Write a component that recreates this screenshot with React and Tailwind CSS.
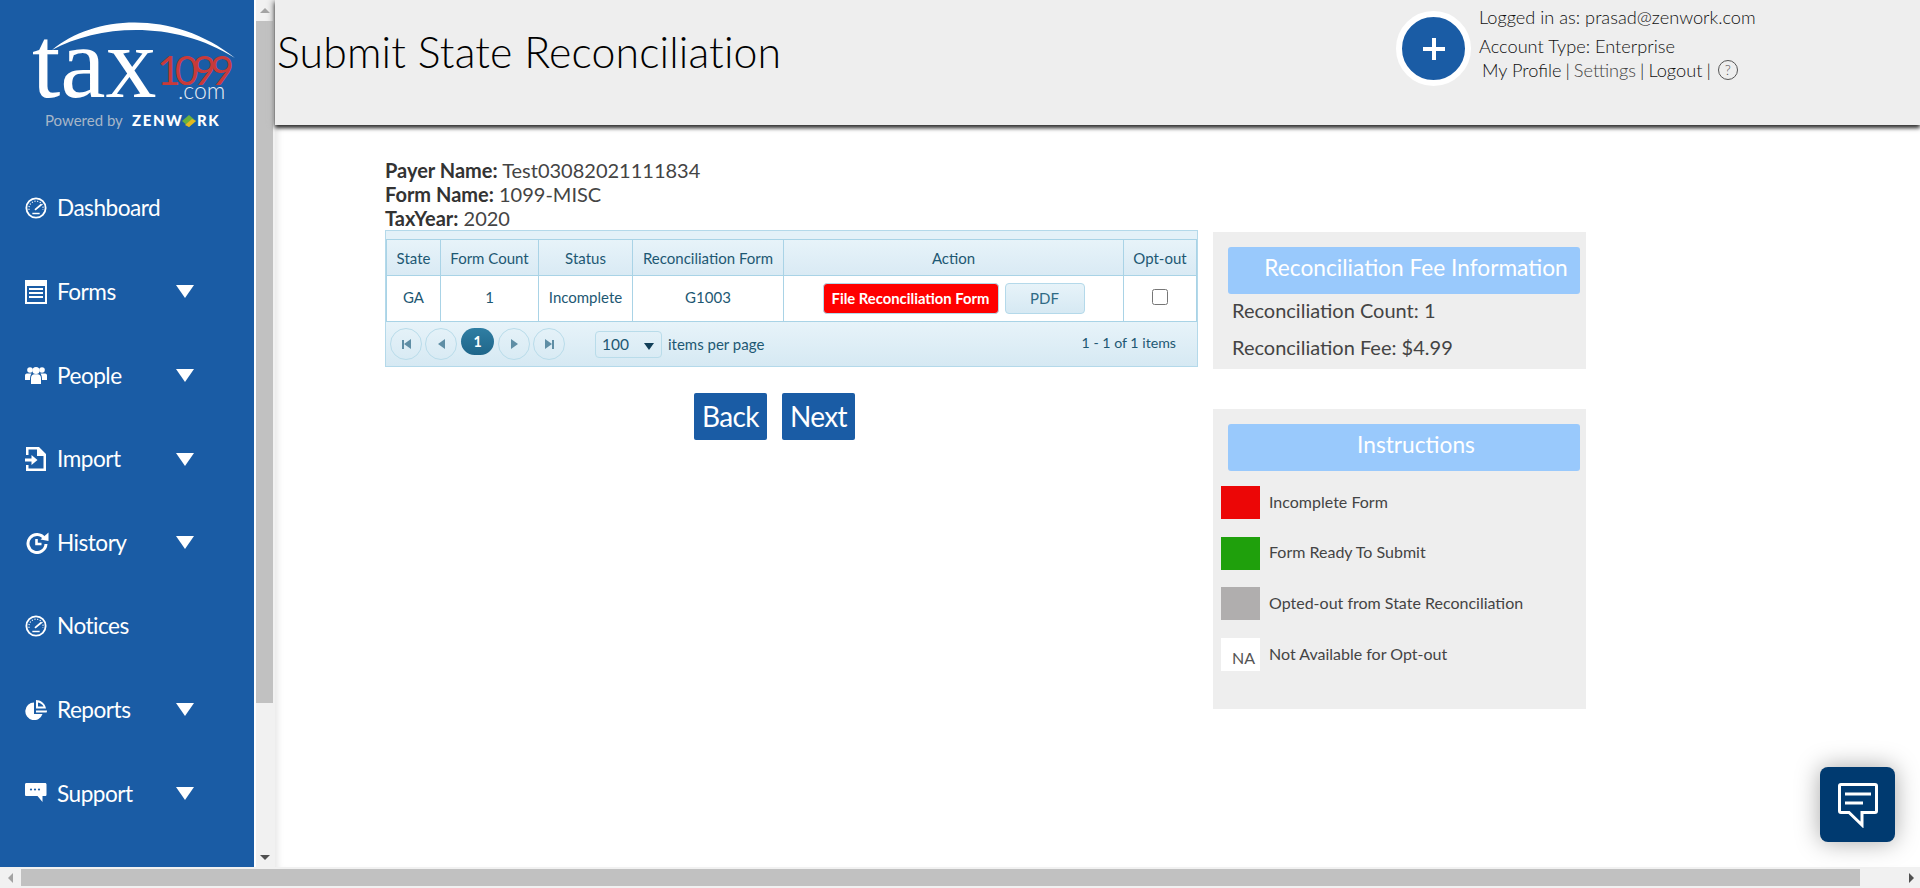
import React from "react";

const latoFont = { fontFamily: '"Lato", sans-serif' };

// sidebar icons, all drawn on a 24 box
const GaugeIcon = () => (
  <svg width="22" height="22" viewBox="0 0 24 24" fill="none" stroke="white">
    <circle cx="12" cy="12" r="10.500" strokeWidth="2" />
    <path d="M4.500 14a7.700 7.700 0 1 1 15 0" strokeWidth="1.300" strokeDasharray="1.200 1.800" />
    <path d="M11.500 13.500 L17.500 8.500" strokeWidth="2" strokeLinecap="round" />
    <path d="M8 18h8" strokeWidth="1.600" />
  </svg>
);

const FormsIcon = () => (
  <svg width="22" height="24" viewBox="0 0 22 24" fill="white">
    <path d="M0 0h22v24H0z M2 6v16h18V6z" fillRule="evenodd" />
    <path d="M4 8h14v2H4zM4 12h14v2H4zM4 16h14v2H4z" />
  </svg>
);

const PeopleIcon = () => (
  <svg width="22" height="18" viewBox="0 0 22 18" fill="white">
    <circle cx="5" cy="4" r="2.800" />
    <circle cx="17" cy="4" r="2.800" />
    <circle cx="11" cy="4.500" r="3.600" />
    <path d="M0 14V9.500C0 8 1 7.500 3 7.500h3.500C5.500 9 5 10.500 5 14z" />
    <path d="M22 14V9.500C22 8 21 7.500 19 7.500h-3.500C16.500 9 17 10.500 17 14z" />
    <path d="M6 18v-6c0-2.500 1.500-3.800 3.500-3.800h3c2 0 3.500 1.300 3.500 3.800v6z" />
  </svg>
);

const ImportIcon = () => (
  <svg width="22" height="24" viewBox="0 0 22 24" fill="white">
    <path d="M1 0h13l7 7v17H1v-6h2.500v3.500h15V9h-6.500V2.500h-8.500V8H1z" />
    <path d="M0 11.500h6.500V8l6 5-6 5v-3.500H0z" />
  </svg>
);

const HistoryIcon = () => (
  <svg width="24" height="22" viewBox="0 0 24 22" fill="none" stroke="white">
    <path d="M19.500 6.500A9 9 0 1 0 21 12" strokeWidth="3" />
    <path d="M15.500 7.500 23.500 0.500v8.500z" fill="white" stroke="none" />
    <path d="M11.500 7v5h5" strokeWidth="2.600" />
  </svg>
);

const ReportsIcon = () => (
  <svg width="22" height="20" viewBox="0 0 22 20" fill="white">
    <path d="M9 2.500a8.800 8.800 0 1 0 8.500 11.500H9z" />
    <path d="M11 0c4.500 0 9 3 10 8.500H11zM13 2.500v4h5.500C17.500 4.500 15.500 3 13 2.500z" fillRule="evenodd" />
    <path d="M11 10.500h11c0 1-.2 1.800-.5 2H11z" />
  </svg>
);

const SupportIcon = () => (
  <svg width="22" height="20" viewBox="0 0 22 20" fill="white">
    <path d="M1.500 0h18.500c1 0 1.500.6 1.500 1.500v10c0 1-.5 1.500-1.500 1.500h-2.500v6l-5-6H1.500C.5 13 0 12.500 0 11.500v-10C0 .6.500 0 1.500 0z" />
    <circle cx="6" cy="6.500" r="1.100" fill="#1a5ca5" />
    <circle cx="10" cy="6.500" r="1.100" fill="#1a5ca5" />
    <circle cx="14" cy="6.500" r="1.100" fill="#1a5ca5" />
  </svg>
);

const navItems = [
  { label: "Dashboard", icon: <GaugeIcon /> },
  { label: "Forms", icon: <FormsIcon />, caret: true },
  { label: "People", icon: <PeopleIcon />, caret: true },
  { label: "Import", icon: <ImportIcon />, caret: true },
  { label: "History", icon: <HistoryIcon />, caret: true },
  { label: "Notices", icon: <GaugeIcon /> },
  { label: "Reports", icon: <ReportsIcon />, caret: true },
  { label: "Support", icon: <SupportIcon />, caret: true },
];

const Logo = () => (
  <svg width="254" height="135" viewBox="0 0 254 135" className="block">
    <text x="32" y="97" fontSize="102" fontFamily="Liberation Serif" fill="white">tax</text>
    <path d="M52 50 C95 14 175 10 235 58 C175 20 100 24 52 50z" fill="white" />
    <text x="157" y="85" fontSize="41" fontFamily="Lato" letterSpacing="-6" fill="#c83a3a">1099</text>
    <text x="178" y="99" fontSize="23" fontFamily="Lato" fontWeight="300" fill="#e8eef6">.com</text>
    <text x="45" y="126" fontSize="15" fontFamily="Lato" fill="#a7b6c8">Powered by</text>
    <text x="132" y="126" fontSize="15" fontFamily="Lato" fontWeight="900" letterSpacing="1.600" fill="white">ZENW</text>
    <path d="M189 115 l7 6 -7 6 -7 -6z" fill="#6ab23e" />
    <path d="M189 127 l7 -6 -4 -2 -7 6z" fill="#e4b820" />
    <text x="197" y="126" fontSize="15" fontFamily="Lato" fontWeight="900" letterSpacing="1.600" fill="white">RK</text>
  </svg>
);

const Sidebar = () => (
  <aside className="w-[254px] h-full shrink-0 bg-[#1a5ca5] overflow-hidden">
    <Logo />
    <nav className="pt-[31.5px] pl-[25px]">
      {navItems.map((item) => (
        <div key={item.label} className="h-[83.6px] flex items-center text-white" style={latoFont}>
          <span className="w-[32px] flex items-center">{item.icon}</span>
          <span className="w-[119px] text-[22.6px] tracking-[-0.5px]">{item.label}</span>
          {item.caret && (
            <span className="w-0 h-0 border-l-[9px] border-r-[9px] border-t-[13px] border-l-transparent border-r-transparent border-t-white" />
          )}
        </div>
      ))}
    </nav>
  </aside>
);

const VerticalScrollbar = () => (
  <div className="w-[19px] h-full shrink-0 bg-[#f1f1f1] flex flex-col items-start">
    <div className="w-[17px] h-[21px] flex items-center justify-center">
      <span className="w-0 h-0 border-l-[5px] border-r-[5px] border-b-[5px] border-l-transparent border-r-transparent border-b-[#a3a3a3]" />
    </div>
    <div className="w-[17px] h-[682px] bg-[#c1c1c1]" />
    <div className="w-[17px] flex-1 flex items-end justify-center pb-[7px]">
      <span className="w-0 h-0 border-l-[5px] border-r-[5px] border-t-[5px] border-l-transparent border-r-transparent border-t-[#505050]" />
    </div>
  </div>
);

const HorizontalScrollbar = () => (
  <div className="h-[21px] w-full bg-[#f1f1f1] flex items-center">
    <div className="w-[21px] flex justify-center">
      <span className="w-0 h-0 border-t-[5px] border-b-[5px] border-r-[5px] border-t-transparent border-b-transparent border-r-[#a3a3a3]" />
    </div>
    <div className="w-[1839px] h-[17px] bg-[#c1c1c1]" />
    <div className="flex-1 flex justify-end pr-[6px]">
      <span className="w-0 h-0 border-t-[5px] border-b-[5px] border-l-[5px] border-t-transparent border-b-transparent border-l-[#505050]" />
    </div>
  </div>
);

const Header = () => (
  <header className="h-[125px] bg-[#eeeeee] shadow-[0_3px_4px_#2f2f2f,-3px_0_6px_#bbbbbb] flex relative">
    <h1 className="w-[1121px] pl-[2px] pt-[25px] text-[42.8px] leading-[54px] font-light text-black tracking-[0.15px] whitespace-nowrap" style={latoFont}>
      Submit State Reconciliation
    </h1>
    <div className="mt-[11px] w-[75px] h-[75px] rounded-full bg-[#1a5ca5] border-[6px] border-white flex items-center justify-center">
      <svg width="22" height="22" viewBox="0 0 22 22" fill="white">
        <path d="M9 0h4v9h9v4h-9v9H9v-9H0V9h9z" />
      </svg>
    </div>
    <div className="ml-[8px] pt-[6px] text-[18.2px] text-[#111111] font-light" style={latoFont}>
      <p className="h-[26px] leading-[22px]">Logged in as: prasad@zenwork.com</p>
      <p className="h-[26px] leading-[28px]">Account Type: Enterprise</p>
      <p className="pl-[3px] flex items-center leading-[24px] gap-[4px]">
        <span>My Profile</span><span>|</span>
        <span className="text-[#444444]">Settings</span><span>|</span>
        <span>Logout</span><span>|</span>
        <span className="ml-[3px] w-[20px] h-[20px] rounded-full border border-[#555555] text-[14px] leading-[18px] text-center text-[#555555]">?</span>
      </p>
    </div>
  </header>
);

const PagerButton = ({ children }) => (
  <span className="w-[32px] h-[32px] rounded-full border border-[#b9dcea] flex items-center justify-center">{children}</span>
);

const Pager = () => (
  <div className="h-[44px] bg-gradient-to-b from-[#e7f3f9] to-[#d6e9f3] flex items-center pl-[4px] pr-[21px] text-[14.2px] text-[#1d5873]">
    <div className="flex items-start gap-[3px] h-[32px]">
      <PagerButton>
        <span className="w-[2px] h-[9px] bg-[#5f8ea5]" />
        <span className="w-0 h-0 border-t-[5px] border-b-[5px] border-r-[7px] border-t-transparent border-b-transparent border-r-[#5f8ea5]" />
      </PagerButton>
      <PagerButton>
        <span className="w-0 h-0 border-t-[5px] border-b-[5px] border-r-[7px] border-t-transparent border-b-transparent border-r-[#5f8ea5]" />
      </PagerButton>
      <span className="mx-[1px] w-[33px] h-[27px] rounded-[14px] bg-gradient-to-b from-[#2f7ea3] to-[#1f668a] text-white font-bold text-center leading-[27px]">1</span>
      <PagerButton>
        <span className="w-0 h-0 border-t-[5px] border-b-[5px] border-l-[7px] border-t-transparent border-b-transparent border-l-[#5f8ea5]" />
      </PagerButton>
      <PagerButton>
        <span className="w-0 h-0 border-t-[5px] border-b-[5px] border-l-[7px] border-t-transparent border-b-transparent border-l-[#5f8ea5]" />
        <span className="w-[2px] h-[9px] bg-[#5f8ea5]" />
      </PagerButton>
    </div>
    <div className="ml-[30px] w-[67px] h-[27px] rounded border border-[#b9dcea] flex items-center pl-[6px] text-[15.5px]">
      <span className="w-[42px] pt-[2px]">100</span>
      <span className="mt-[5px] w-0 h-0 border-l-[5px] border-r-[5px] border-t-[7px] border-l-transparent border-r-transparent border-t-[#123f58]" />
    </div>
    <span className="ml-[6px] text-[15px]">items per page</span>
    <span className="ml-auto mb-[2px]">1 - 1 of 1 items</span>
  </div>
);

const StateTable = () => (
  <div className="border border-[#b4d9ea] bg-[#e4f1f8] w-[813px]" style={latoFont}>
    <div className="h-[8px]" />
    <table className="w-full table-fixed border-collapse text-[15px] text-[#1d5873] text-center bg-white">
      <colgroup>
        <col className="w-[54px]" />
        <col className="w-[98px]" />
        <col className="w-[94px]" />
        <col className="w-[151px]" />
        <col className="w-[340px]" />
        <col />
      </colgroup>
      <thead>
        <tr className="h-[36px] bg-gradient-to-b from-[#e7f3f9] to-[#d9eaf4]">
          {["State", "Form Count", "Status", "Reconciliation Form", "Action", "Opt-out"].map((col) => (
            <th key={col} className="font-normal pt-[1px] border border-[#a9d3e6] whitespace-nowrap">{col}</th>
          ))}
        </tr>
      </thead>
      <tbody>
        <tr className="h-[46px]">
          <td className="pb-[2px] border border-[#a9d3e6]">GA</td>
          <td className="pb-[2px] border border-[#a9d3e6]">1</td>
          <td className="pb-[2px] border border-[#a9d3e6]">Incomplete</td>
          <td className="pb-[2px] border border-[#a9d3e6]">G1003</td>
          <td className="border border-[#a9d3e6]">
            <div className="flex justify-center gap-[6px]">
              <button className="w-[176px] h-[31px] pb-[1px] rounded bg-[#ff0000] border border-[#b4d9ea] text-white font-bold text-[14.8px]">File Reconciliation Form</button>
              <button className="w-[80px] h-[31px] pb-[1px] rounded bg-gradient-to-b from-[#e7f3f9] to-[#d6e9f3] border border-[#b4d9ea] text-[#2f6a85] text-[15px]">PDF</button>
            </div>
          </td>
          <td className="border border-[#a9d3e6]">
            <input type="checkbox" className="w-4 h-4 align-middle mb-[5px] mr-[1px]" readOnly />
          </td>
        </tr>
      </tbody>
    </table>
    <Pager />
  </div>
);

const NavButton = ({ children }) => (
  <button className="w-[73px] h-[47px] rounded-[2px] bg-[#1a5ca5] text-white text-[28px] tracking-[-0.6px] pb-[1px]" style={latoFont}>
    {children}
  </button>
);

const PanelTitle = ({ children }) => (
  <div className="ml-[15px] w-[352px] h-[47px] pl-[24px] rounded-[3px] bg-[#99c9fc] text-white text-[22.7px] leading-[41px] text-center whitespace-nowrap">
    {children}
  </div>
);

const legend = [
  { label: "Incomplete Form", box: "bg-[#ec0606]" },
  { label: "Form Ready To Submit", box: "bg-[#1fa00c]" },
  { label: "Opted-out from State Reconciliation", box: "bg-[#b0aeae]" },
  { label: "Not Available for Opt-out", box: "bg-white", text: "NA" },
];

const RightPanels = () => (
  <div className="w-[373px] mt-[74px] flex flex-col gap-[40px] text-[#444444]" style={latoFont}>
    <section className="h-[137px] bg-[#eeeeee] pt-[15px]">
      <PanelTitle>Reconciliation Fee Information</PanelTitle>
      <div className="pl-[19px] -mt-[2px] text-[20px] leading-[37px]">
        <p>Reconciliation Count: 1</p>
        <p>Reconciliation Fee: $4.99</p>
      </div>
    </section>
    <section className="h-[300px] bg-[#eeeeee] pt-[15px]">
      <PanelTitle>Instructions</PanelTitle>
      <ul className="pl-[8px] pt-[15px] flex flex-col gap-[17.7px] text-[16px]">
        {legend.map((row) => (
          <li key={row.label} className="flex items-center h-[33px]">
            <span className={`w-[39px] h-[33px] flex items-end justify-end pr-[5px] pb-[3px] text-[16px] leading-[20px] text-[#555555] ${row.box}`}>{row.text}</span>
            <span className="ml-[9px] pb-[2px]">{row.label}</span>
          </li>
        ))}
      </ul>
    </section>
  </div>
);

const ChatButton = () => (
  <div className="absolute left-[1820px] top-[767px] w-[75px] h-[75px] rounded-lg bg-[#003a70] shadow-[0_0_24px_rgba(0,0,0,0.35)] flex items-center justify-center">
    <svg width="42" height="46" viewBox="0 0 42 46" fill="none" stroke="white" strokeWidth="3">
      <path d="M4 2.500h34c1 0 1.500.5 1.500 1.500v25c0 1-.5 1.500-1.500 1.500H25V43L12 30.500H4c-1 0-1.500-.5-1.500-1.500V4c0-1 .5-1.500 1.500-1.500z" />
      <path d="M8 12h26M8 21h18" />
    </svg>
  </div>
);

export default function App() {
  return (
    <div className="relative w-[1920px] h-[888px] bg-white overflow-hidden flex flex-col">
      <div className="flex flex-1 min-h-0">
        <Sidebar />
        <div className="w-[2px] bg-white shrink-0" />
        <VerticalScrollbar />
        <main className="flex-1 min-w-0 shadow-[inset_7px_0_6px_-4px_#e8e8e8]">
          <Header />
          <div className="pl-[110px] pt-[33px] flex gap-[15px]">
            <div>
              <div className="text-[20px] leading-[24px] text-[#444444]" style={latoFont}>
                <p><b className="text-[#333333]">Payer Name:</b> Test03082021111834</p>
                <p><b className="text-[#333333]">Form Name:</b> 1099-MISC</p>
                <p><b className="text-[#333333]">TaxYear:</b> 2020</p>
              </div>
              <StateTable />
              <div className="mt-[26px] ml-[309px] flex gap-[15px]">
                <NavButton>Back</NavButton>
                <NavButton>Next</NavButton>
              </div>
            </div>
            <RightPanels />
          </div>
        </main>
      </div>
      <HorizontalScrollbar />
      <ChatButton />
    </div>
  );
}
